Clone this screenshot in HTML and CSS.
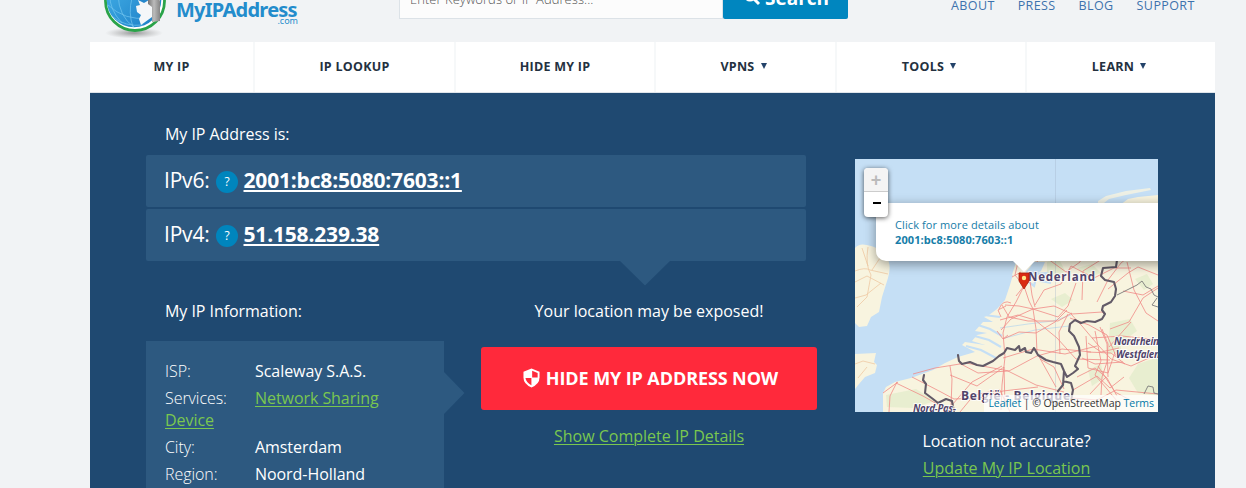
FILE: index.html
```html
<!DOCTYPE html>
<html lang="en">
<head>
<meta charset="utf-8">
<title>What Is My IP Address</title>
<link rel="stylesheet" href="styles.css">
</head>
<body>
<header class="header">
  <div class="logo">
    <svg class="globe" width="68" height="42" viewBox="0 0 68 42">
      <defs>
        <radialGradient id="shadow"><stop offset="0" stop-color="#777" stop-opacity=".75"/><stop offset="1" stop-color="#999" stop-opacity="0"/></radialGradient>
        <linearGradient id="sea" x1="0" y1="0" x2="1" y2="1"><stop offset="0" stop-color="#46b3ea"/><stop offset="1" stop-color="#1a7cc4"/></linearGradient>
        <linearGradient id="pole" x1="0" x2="1"><stop offset="0" stop-color="#777"/><stop offset=".5" stop-color="#bbb"/><stop offset="1" stop-color="#858585"/></linearGradient>
      </defs>
      <ellipse cx="36" cy="33" rx="29" ry="5.500" fill="url(#shadow)"/>
      <circle cx="37" cy="1" r="29.500" fill="#fff" stroke="#2aa349" stroke-width="2.800"/>
      <circle cx="36" cy="0" r="27.300" fill="url(#sea)"/>
      <g fill="none" stroke="#72c6ef" stroke-width=".7"><path d="M10 5Q27 21 50 18M15 17Q27 27 45 25M20-5Q21 17 36 27M34-2Q30 13 35 27M12-5Q11 9 24 23"/></g>
      <path d="M40 0h22q-1 10-8 17l-11 8-2-6 2-4-4-3-1-6 4-1z" fill="#f4f7f9"/>
      <path d="M40 0l6 3 5-3z" fill="#2688cc"/>
      <path d="M50-2h10q2 2 2 4v19l-8 1V7l-4-3z" fill="url(#pole)"/>
    </svg>
    <div class="wordmark">
      <span class="wm-top">What Is</span>
      <span class="wm-main">MyIPAddress</span>
      <span class="wm-com">.com</span>
    </div>
  </div>
  <div class="search">
    <div class="field">Enter Keywords or IP Address...</div>
    <div class="search-btn"><svg width="18" height="18" viewBox="0 0 18 18"><circle cx="7" cy="7" r="5.200" fill="none" stroke="#fff" stroke-width="2.600"/><path d="M11 11l5 5" stroke="#fff" stroke-width="3"/></svg><span class="search-text">Search</span></div>
  </div>
  <div class="links"><a>ABOUT</a><a>PRESS</a><a>BLOG</a><a>SUPPORT</a></div>
</header>
<nav class="nav">
  <a><span>MY IP</span></a><a><span>IP LOOKUP</span></a><a><span>HIDE MY IP</span></a><a class="drop"><span>VPNS</span><i class="caret"></i></a><a class="drop"><span>TOOLS</span><i class="caret"></i></a><a class="drop"><span>LEARN</span><i class="caret"></i></a>
</nav>
<main class="main">
  <section class="left">
    <h2 class="label">My IP Address is:</h2>
    <div class="ips">
      <div class="ip"><span class="ver">IPv6:</span><span class="help">?</span><a class="addr">2001:bc8:5080:7603::1</a></div>
      <div class="ip"><span class="ver">IPv4:</span><span class="help">?</span><a class="addr">51.158.239.38</a></div>
      <svg class="arrow-down" width="52" height="26"><path d="M0 0h52L26 25.500z" fill="#2d5980"/></svg>
    </div>
    <div class="lower">
      <div class="info-col">
        <h2 class="label info-label">My IP Information:</h2>
        <div class="info">
          <p><span class="key">ISP:</span><span class="val">Scaleway S.A.S.</span></p>
          <p><span class="key">Services:</span><a class="green">Network Sharing Device</a></p>
          <p><span class="key">City:</span><span class="val">Amsterdam</span></p>
          <p><span class="key">Region:</span><span class="val">Noord-Holland</span></p>
          <svg class="arrow-right" width="21" height="42"><path d="M0 0v42L20.500 21z" fill="#2d5980"/></svg>
        </div>
      </div>
      <div class="cta-col">
        <h2 class="exposed">Your location may be exposed!</h2>
        <a class="cta"><svg width="17" height="20" viewBox="0 0 18 20"><path d="M9 0l8.500 3.500v6Q17.500 16.500 9 20Q.5 16.500.5 9.500v-6z" fill="#fff"/><path d="M9.700 2.300l5.800 2.300v5H9.700zM8.900 10.100v7.500Q3.300 15 2.600 10.100z" fill="#ff293b"/></svg><span>HIDE MY IP ADDRESS NOW</span></a>
        <a class="green show">Show Complete IP Details</a>
      </div>
    </div>
  </section>
  <aside class="right">
    <div class="map">
      <svg width="303" height="253" viewBox="0 0 303 253">
        <rect width="303" height="253" fill="#c5dff5"/>
        <g fill="#f8f4df">
          <path d="M0 89Q4 84 12 86Q24 88 31 96Q37 106 33 119L27 138L24 153L16 158L12 167L4 168L0 164z"/>
          <path d="M0 195l21-1-2 9 3 3-2 8-10 4-6 7-4 5z"/>
          <path d="M303 36l-20 2-10 2-8 6-5 3v60H166L159 112 155 126 150 141 142 150 134 156 129 158 138 163 128 163 120 172 132 174 122 176 117 182 130 186 110 183 107 186 120 193 103 198 90 204 78 211 56 219 40 223 31 228 28 234 28 253H303z"/>
          <path d="M157 116l5-16h110v16z"/>
          <path d="M243 42l8-5 20-5 24-3 1 2-25 5-17 4-5 4-6 2z" fill="#eef0e5"/>
        </g>
        <g fill="#dfebc8" opacity=".65"><path d="M192 103l12-3 6 12-10 9-8-5zM255 164l20-4 7 12-14 10-14-5zM283 205l20-7v39l-20-3-9-15zM233 211l13-6 3 14-12 8zM222 109l15-4 9 9-15 5zM253 180l12-6 1 17-13 5zM31 236l30-6 19 12-22 7-26-1zM196 140l14-6 8 7-11 7zM280 120l12-5 6 10-9 6z"/></g>
        <g fill="none" stroke="#c5dff5" stroke-width="2.200"><path d="M120 165l15 5 12 7M116 176l18 5 12 7M111 187l15 4 15 8M129 156l16 2M180 105l-8 8-1 8 8 6 3-12 9-1-5 8 10 2"/></g>
        <path d="M178 103h12l-4 9-6 4 2 6-5-3-3-8z" fill="#c5dff5"/>
        <g fill="none" stroke="#b5d5ec" stroke-width=".7"><path d="M145 169l28-4 25-3 18-6M150 179l30-8 34-4"/></g>
        <path d="M200.500 0v253" stroke="#a2b5cb" stroke-width=".6" opacity=".6"/>
        <g fill="none" stroke="#efc9a3" stroke-width=".8"><path d="M0 112q10-4 15-1l18 4M13 88q-3 18 3 28l-4 22-10 10M0 139l11-3 15-12M7 89l6 18M17 111l12-18M0 205l8-3 12 3M3 219l9-11M0 123l12-6 17 9"/></g>
        <g fill="none" stroke="#f08a86" stroke-width=".8" stroke-linejoin="round">
          <path d="M163 103l-3 13 9 11-8 16-9 15-4 16 2 24-3 28-1 25M169 127l5 15 4 8 3 20 1 24 19 34M178 150l-14-3-14-1M178 150l-22 10-10 11M178 150l21-3 18 8 30-2 2 2M161 137l8-10 6-5 2 14 3 12M182 103l7-15 19 0 25-10M166 113l-9 5M189 88l4 12 18 13 14-10 3-11M180 146l9-15 17-6 10-18 23 12 20-10 17 0M178 150l25 8 10-11 8-23M147 146l7 12 19 4 30 0 14-8M148 180l16-7 17 1 19-11 12-12M145 161l18-5 17 5 22 18 19 21 34 1M148 199l30-9 32 5 32-8"/>
          <path d="M213 155l-9 18 1 22M216 155l11 12 16 19 13 14 20 7 27-12M215 159l19 7 18 10 9 21M227 141l1-29 16-10 18-15 9-4M242 143l11-22 13-17 16-13M253 130l20-16 10-6 20 8M247 170l6 15-1 18-5 15-1 18M255 170l19-7 14-24 15-10M272 103l7 28 12 23 12 8M268 132l20 4 15-9M276 163l-22 25M303 181l-36-4-30 2"/>
          <path d="M58 215l22-6 31-5 27 5 16 3 28-15 25-7 29 3M42 223l-7 14-1 16M41 224l27 13 28 16M57 218l29 15 13 7 25-1 24-7 35-4M95 207l2 13-1 28M95 216l27 11 27-19 1 40M97 246l20-23 30-16M104 204l19 10 30-2 28 14 28 7M28 234l15-11M105 253l14-17 26-5 10 22M185 200l14 8 10 22"/>
          <path d="M233 184l13 9 18-4M231 177l2 32 20 5 7-21M240 172l6 30-6 14 12 14 10 12M245 168l7 17 1 33M227 199l13 6 28-2M222 218l18-9 12 10 10 18M218 231l24-14 13 12 14-11M217 239l25 2 19-10 42 4M232 193l24 1 14 11M251 218l-16 17M243 207l17 26 17 9M144 150q4-10 12-6M146 158l-3-7 8-4M142 172l6 8 5-4"/>
        </g>
        <g fill="none" stroke="#625a67" stroke-width="2.100" stroke-linejoin="round" stroke-linecap="round">
          <path d="M262 101L261 108 248 109 246 117 250 121 259 123 261 130 260 137 256 143 248 147 247 151 250 155 247 160 240 163 232 162 226 164 220 161 215 165 214 172 219 177 224 188 225 196 220 207 223 210 218 214 212 218 209 212 206 205 198 203 191 201 183 196 179 189 176 194 171 193 170 189 165 192 164 187 160 191 156 190 152 189 149 194 144 197 138 202 128 207 122 206 115 203 107 205 104 202 103 196M209 212L208 226 203 232 201 246M208 222L216 224 218 231 216 241"/>
          <path d="M69 216l-1 5 3 4-1 9 8 6 5 4 8-4 6 2 2 11"/>
        </g>
        <path d="M262 136l20-10 5-4 4 6 5 2 3 6 4 2M302 139l-5 7 6 2M289 235l4-8 5 1 1 6 4 1" fill="none" stroke="#7b7b7b" stroke-width=".9"/>
        <g class="map-text" fill="#51446b" stroke="#fff" stroke-width="2" paint-order="stroke" stroke-opacity=".8">
          <text x="173" y="122" textLength="67" font-size="11.500">Nederland</text>
          <text x="106" y="241" textLength="109" font-size="12">België - Belgique</text>
          <text class="it" x="259" y="186" textLength="45" font-size="10">Nordrhein</text>
          <text class="it" x="261" y="199" textLength="44" font-size="10">Westfalen</text>
          <text class="it" x="58" y="253" textLength="43" font-size="10">Nord-Pas-</text>
        </g>
      </svg>
      <div class="popup"><span>Click for more details about</span><b>2001:bc8:5080:7603::1</b></div>
      <svg class="tip" width="28" height="30" viewBox="0 0 28 30"><path d="M2 0h24L14 12z" fill="#fff"/><path d="M9 13h10v8l-5 8-5-8z" fill="#d92b12" stroke="#a9200e" stroke-width=".8"/><circle cx="14" cy="18" r="2.200" fill="#ffe98a"/></svg>
      <div class="zoom"><span class="plus">+</span><span class="minus"><i></i></span></div>
      <div class="credit"><a>Leaflet</a> | © OpenStreetMap <a>Terms</a></div>
    </div>
    <div class="accurate">Location not accurate?</div>
    <a class="green update">Update My IP Location</a>
  </aside>
</main>
</body>
</html>
```
FILE: styles.css
```css
* { box-sizing: border-box; }
body { margin: 0; height: 488px; overflow: hidden; background: #f1f3f5; font-family: "Open Sans", sans-serif; font-size: 16px; color: #fff; }
h2, p { margin: 0; font-weight: 400; font-size: 16px; }
.header { height: 42px; padding-left: 98px; display: flex; overflow: hidden; }
.logo { display: flex; width: 301px; flex: none; }
.globe { flex: none; overflow: hidden; }
.wordmark { width: 123px; margin: -18px 0 0 10px; display: flex; flex-direction: column; color: #238ccc; font-family: "Noto Sans", sans-serif; white-space: nowrap; }
.wm-top { font-size: 18px; line-height: 20px; font-weight: 600; color: #35a52f; padding-left: 2px; }
.wm-main { font-size: 20px; line-height: 20px; font-weight: 700; letter-spacing: -.75px; margin-top: -2px; }
.wm-com { font-size: 9px; line-height: 8px; text-align: right; margin-top: -3px; padding-right: 1px; }
.search { display: flex; width: 449px; height: 44px; margin-top: -25px; flex: none; }
.field { width: 324px; background: #fcfcfc; border: 1px solid #dce2e7; padding: 13px 10px 0; line-height: 20px; font-size: 13px; font-weight: 300; color: #555; letter-spacing: .05px; }
.search-btn { flex: 1; background: #0086bf; border-radius: 2px; display: flex; padding: 11px 0 0 20px; gap: 4px; font-size: 19px; line-height: 24px; font-weight: 700; }
.search-btn svg { margin-top: 2px; }
.links { display: flex; gap: 23px; margin: -4px 0 0 103px; font-size: 12.500px; line-height: 20px; font-weight: 500; color: #3d72ad; letter-spacing: .4px; }
.nav { height: 51px; width: 1125px; margin-left: 90px; border-bottom: 1px solid #dfe5eb; background: #fff; display: grid; grid-template-columns: 165px 201px 200px 181px 190px 188px; }
.nav a { display: flex; align-items: center; justify-content: center; gap: 6px; border-right: 2px solid #f6f8f9; font-size: 12.500px; font-weight: 700; color: #24313f; letter-spacing: .25px; padding-bottom: 1px; }
.nav a:last-child { border: 0; }
.nav .drop { padding-right: 4px; }
.caret { border: 3px solid transparent; border-top: 6px solid #24436a; border-bottom: 0; margin-top: -1px; }
.main { width: 1125px; height: 395px; margin-left: 90px; background: #1f4971; padding-left: 56px; display: flex; }
.left { width: 709px; flex: none; }
.label { padding: 29px 0 0 19px; height: 62px; line-height: 24px; letter-spacing: -.05px; }
.ips { width: 660px; position: relative; display: flex; flex-direction: column; gap: 2px; }
.ip { height: 52px; background: #2d5980; border-radius: 2px; display: flex; align-items: center; padding-left: 18px; }
.ver { width: 52px; font-size: 21px; line-height: 28px; font-weight: 400; letter-spacing: -.2px; margin-top: -2px; }
.help { width: 22px; height: 22px; border-radius: 50%; background: #0085bd; margin: 1px 5.500px 0 0; display: flex; align-items: center; justify-content: center; font-size: 12px; }
.addr { font-size: 21px; line-height: 28px; font-weight: 700; letter-spacing: -.18px; margin-top: -2px; text-decoration: underline; text-decoration-thickness: 2px; text-underline-offset: 2px; }
.arrow-down { position: absolute; left: 473px; top: 105px; }
.lower { display: flex; gap: 37px; }
.info-col { width: 298px; }
.info-label { height: 80px; padding-top: 38px; }
.info { position: relative; height: 160px; background: #2d5980; padding: 19px 50px 0 19px; }
.info p { line-height: 22px; margin-bottom: 5px; letter-spacing: -.06px; }
.key { display: inline-block; width: 90px; font-weight: 300; }
.green { color: #7ac74f; text-decoration: underline; text-underline-offset: 2px; text-decoration-thickness: 1px; }
.arrow-right { position: absolute; left: 298px; top: 31px; }
.cta-col { width: 336px; text-align: center; display: flex; flex-direction: column; }
.exposed { height: 86px; padding: 38px 0 0; line-height: 24px; }
.cta { height: 63px; border-radius: 3px; background: #ff293b; display: flex; align-items: center; justify-content: center; gap: 6px; font-size: 18px; font-weight: 700; letter-spacing: -.1px; padding: 0 0 2px 3px; }
.show { margin-top: 14px; line-height: 24px; }
.right { width: 303px; padding-top: 66px; text-align: center; }
.map { position: relative; height: 253px; overflow: hidden; margin-bottom: 17px; }
.map > svg { display: block; }
.map-text { font-family: "Open Sans", sans-serif; font-weight: 700; }
.it { font-style: italic; }
.popup { position: absolute; left: 21px; top: 44px; width: 320px; height: 58px; background: #fff; border-radius: 10px; box-shadow: 0 3px 12px rgba(0,0,0,.4); padding: 14px 0 0 19px; text-align: left; font-size: 11px; line-height: 15px; letter-spacing: .1px; color: #167da8; display: flex; flex-direction: column; }
.popup b { font-weight: 700; }
.map > .tip { position: absolute; left: 155px; top: 101px; }
.zoom { position: absolute; left: 9px; top: 9px; width: 24px; height: 49px; border-radius: 4px; overflow: hidden; background: #fff; box-shadow: 0 1px 5px rgba(0,0,0,.65); display: flex; flex-direction: column; }
.plus { height: 24px; background: #f4f4f4; border-bottom: 1px solid #ccc; color: #bbb; font: bold 18px/24px "Liberation Sans", sans-serif; }
.minus { height: 25px; display: flex; align-items: center; justify-content: center; }
.minus i { width: 8px; height: 2px; background: #000; margin-top: -3px; margin-left: 2px; }
.credit { position: absolute; right: 0; bottom: 0; height: 17px; padding: 0 4px; background: rgba(255,255,255,.7); color: #333; font-size: 10.500px; line-height: 17px; letter-spacing: -.05px; white-space: nowrap; }
.credit a { color: #0078a8; }
.accurate { line-height: 24px; margin-bottom: 3px; }
.update { line-height: 24px; }
```
